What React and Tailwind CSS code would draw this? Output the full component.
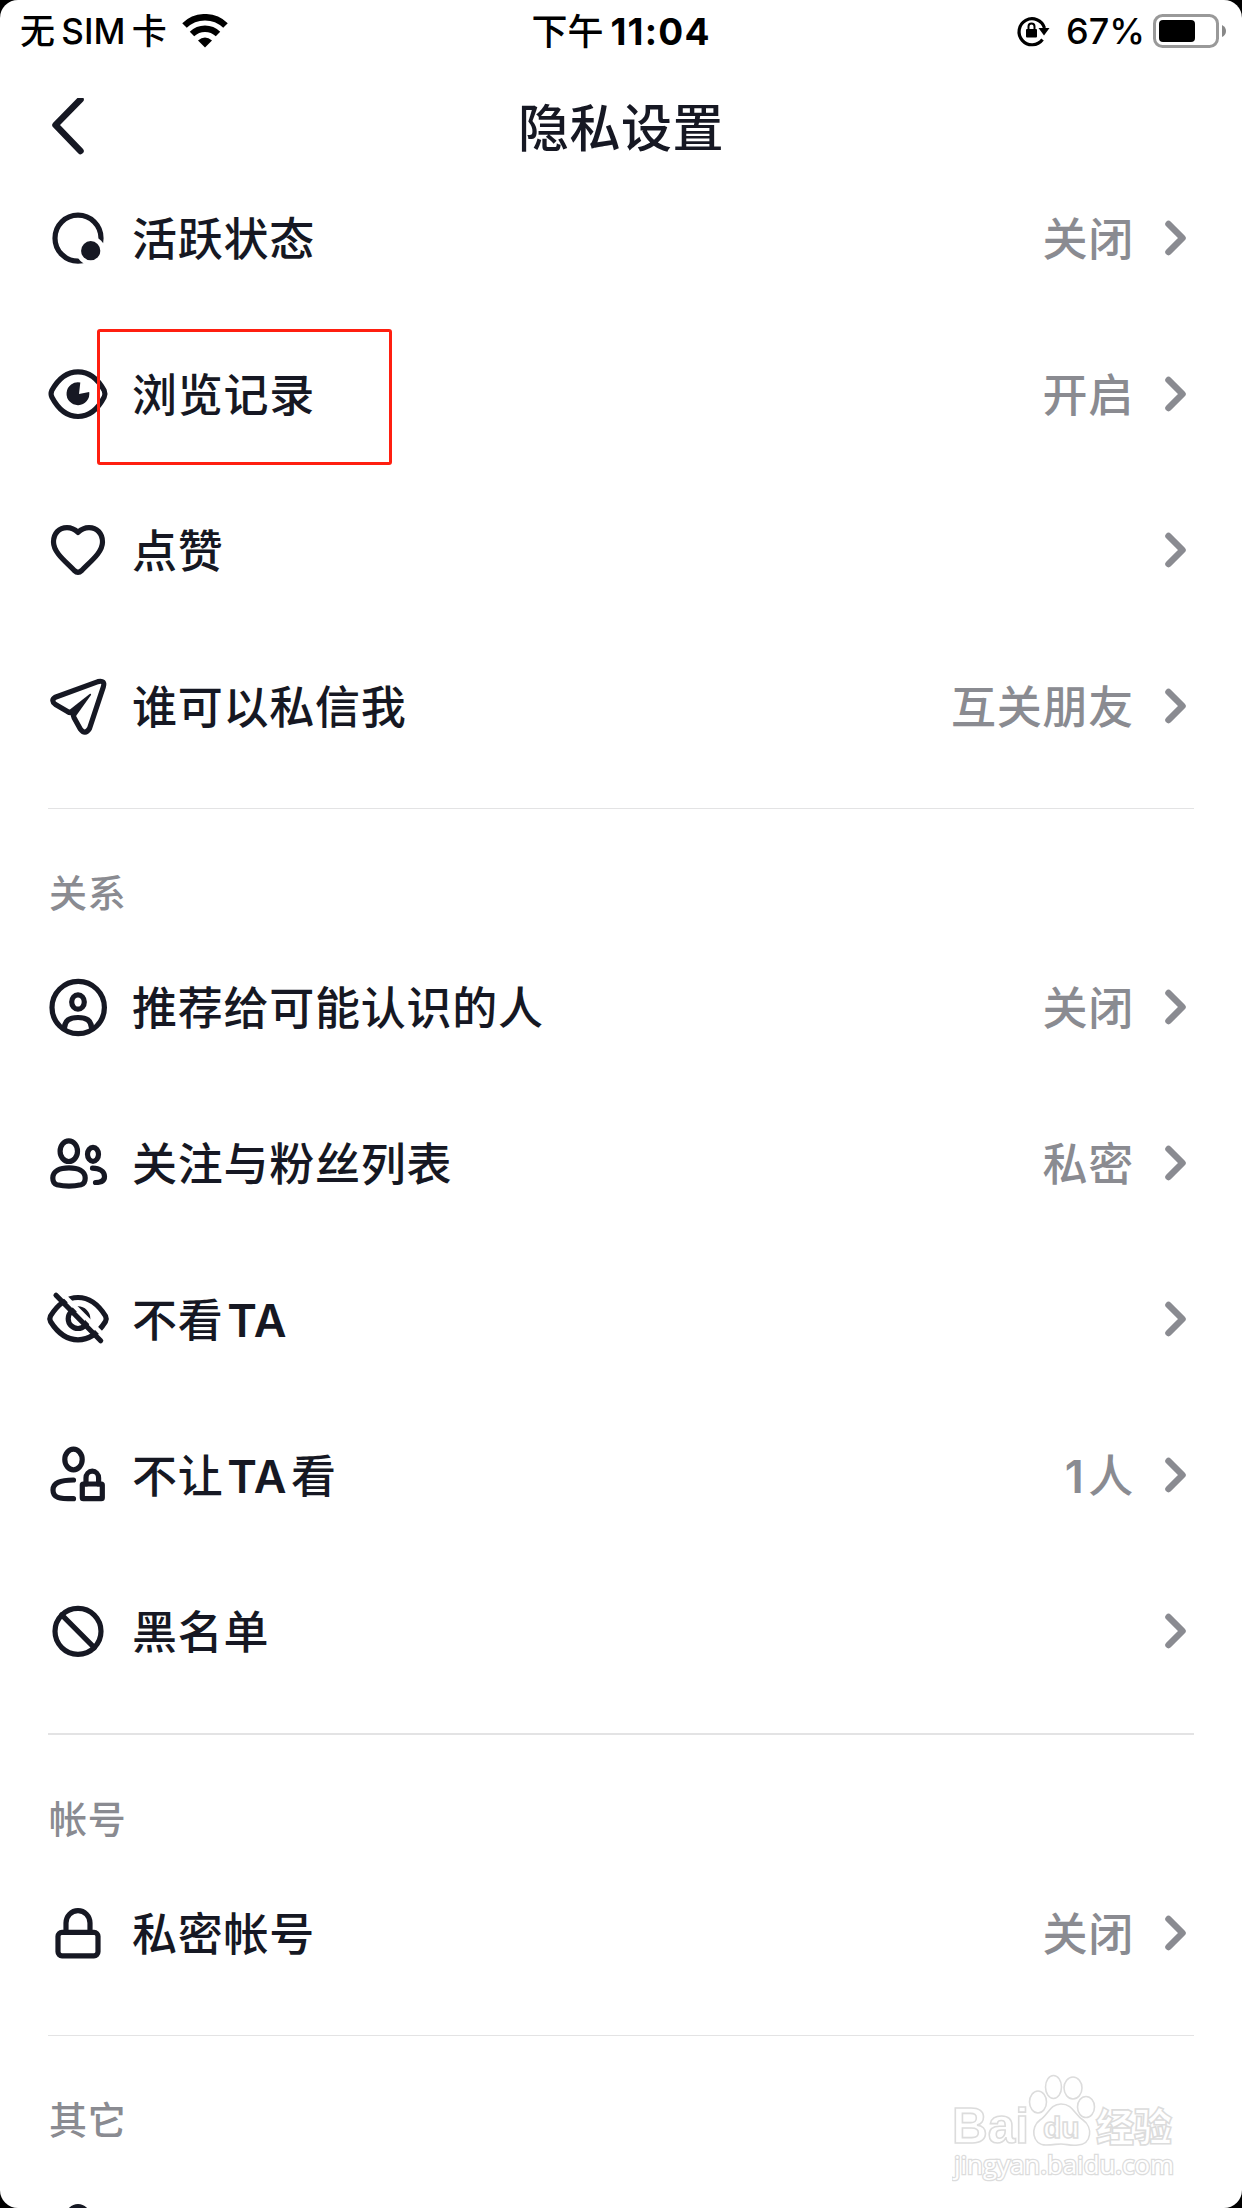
const ActiveIcon = () => (
  <>
    <circle cx="30" cy="30.2" r="23" />
    <circle cx="42.7" cy="42.7" r="14.5" fill="#fff" stroke="none" />
    <circle cx="42.7" cy="42.7" r="9.6" fill="currentColor" stroke="none" />
  </>
);

const EyeIcon = () => (
  <>
    <path d="M3.8 26.5Q14 7.8 30 7.8T56.2 26.5Q57.6 29.8 56.2 33Q46 52.5 30 52.5T3.8 33Q2.4 29.8 3.8 26.5Z" />
    <path d="M32.3 18.6A11.4 11.4 0 1 0 41.2 28L31 30Z" fill="currentColor" stroke="none" />
  </>
);

const HeartIcon = () => (
  <path d="M30 12.4C26.5 9 22.8 7.6 19 7.6C11 7.6 5.5 13.5 5.5 22C5.5 33 19 42.5 26.3 50.5Q30 54 33.7 50.5C41 42.5 54.5 33 54.5 22C54.5 13.5 49 7.6 41 7.6C37.2 7.6 33.5 9 30 12.4Z" />
);

const SendIcon = () => (
  <>
    <path d="M24.5 36.2Q22 37.2 19.5 35.5L7.5 28.5Q2.2 24.5 7.3 21.3L50 5.6Q57.5 4 55.3 11L41.5 52.5Q37 59.5 32.3 53L26.2 42Q25 39.5 25.3 36.2" />
    <path d="M20 35L42 17.7Q43.5 17.5 43 19L28 40Z" fill="currentColor" stroke="none" />
  </>
);

const UserCircleIcon = () => (
  <>
    <circle cx="30.2" cy="30.5" r="26.2" />
    <ellipse cx="30" cy="25" rx="6.3" ry="7.2" />
    <path d="M16.5 51C16.5 43 22 40.5 30 40.5S43.5 43 43.5 51" />
  </>
);

const UsersIcon = () => (
  <>
    <ellipse cx="20.8" cy="18.2" rx="8.7" ry="10.3" />
    <path d="M4.8 45C4.8 38 12 34.8 21 34.8S37.2 38 37.2 45Q37.3 50.5 33 51.7Q21 54.5 9 51.7Q4.8 50.5 4.8 45Z" />
    <ellipse cx="45" cy="21.3" rx="5.5" ry="7" />
    <path d="M44.5 35.2C52 35.5 56.5 38.5 56.5 43.5Q56.5 49.5 47.5 49.5" />
  </>
);

const EyeOffIcon = () => (
  <>
    <path d="M2.5 27Q14 8.5 30 8.5T57.5 27Q58.8 29.7 57.5 32.5Q46 50.8 30 50.8T2.5 32.5Q1.2 29.7 2.5 27Z" />
    <circle cx="30" cy="29.7" r="9.8" />
    <path d="M12 2.5L61 52" stroke="#fff" strokeWidth="4.5" />
    <path d="M8 6.3L52.7 51.7" />
  </>
);

const UserLockIcon = () => (
  <>
    <ellipse cx="25.5" cy="14.5" rx="8.7" ry="10.3" />
    <path d="M25.5 35C12 35 5 38 5 45C5 53 11 53.7 25.5 53.7" />
    <rect x="34.3" y="39" width="20" height="14.7" rx="1" />
    <path d="M38 39V33a6.3 6.8 0 0 1 12.6 0V39" />
  </>
);

const BanIcon = () => (
  <>
    <circle cx="30" cy="30.3" r="23" />
    <path d="M13.7 13.8L46.3 46.7" />
  </>
);

const LockIcon = () => (
  <>
    <rect x="10" y="29.3" width="40" height="23.5" rx="4" />
    <path d="M18 29V20a12 12.3 0 0 1 24 0V29" />
  </>
);

const PersonIcon = () => <circle cx="30" cy="12" r="9.5" />;

const Latin = ({ children }) => <span className="font-semibold">{children}</span>;

const sections = [
  {
    items: [
      { icon: ActiveIcon, label: '活跃状态', value: '关闭' },
      { icon: EyeIcon, label: '浏览记录', value: '开启', marked: true },
      { icon: HeartIcon, label: '点赞' },
      { icon: SendIcon, label: '谁可以私信我', value: '互关朋友' },
    ],
  },
  {
    title: '关系',
    divider: 'h-px',
    items: [
      { icon: UserCircleIcon, label: '推荐给可能认识的人', value: '关闭' },
      { icon: UsersIcon, label: '关注与粉丝列表', value: '私密' },
      { icon: EyeOffIcon, label: <>不看 <Latin>TA</Latin></> },
      { icon: UserLockIcon, label: <>不让 <Latin>TA</Latin> 看</>, value: <><Latin>1</Latin> 人</> },
      { icon: BanIcon, label: '黑名单' },
    ],
  },
  {
    title: '帐号',
    divider: 'h-0.5',
    items: [{ icon: LockIcon, label: '私密帐号', value: '关闭' }],
  },
  {
    title: '其它',
    divider: 'h-px',
    items: [{ icon: PersonIcon, label: '' }],
  },
];

const StatusBar = () => (
  <div className="grid h-16 shrink-0 grid-cols-3 items-center pb-0.5 text-[36px] leading-none text-black">
    <div className="flex items-center pl-5 font-medium">
      <span className="pt-px text-[35px] whitespace-nowrap [word-spacing:-3px]">无 SIM 卡</span>
      <svg width="46" height="34" viewBox="0 0 46 34" className="ml-[15px]" fill="none" stroke="currentColor">
        <path d="M2.5 11.5A29.5 29.5 0 0 1 43.5 11.5" strokeWidth="6.5" />
        <path d="M10 20A19 19 0 0 1 36 20" strokeWidth="6.5" />
        <path d="M16 26.5Q23 20.5 30 26.5L23 33.5Z" fill="currentColor" stroke="none" />
      </svg>
    </div>
    <div className="flex items-center justify-center whitespace-nowrap">
      <span className="pt-px">下午</span>
      <span className="ml-[7px] text-[37px] font-bold tracking-[1.2px]">11:04</span>
    </div>
    <div className="flex items-center justify-end pr-[15px]">
      <svg width="34" height="32" viewBox="0 0 34 32" fill="none" stroke="currentColor" strokeWidth="3.2">
        <path d="M26.5 24.5A13 13 0 1 1 28.5 13" />
        <path d="M22.5 13H33.5L28 20.5Z" fill="currentColor" stroke="none" />
        <rect x="10" y="14" width="11" height="8.5" rx="1" fill="currentColor" stroke="none" />
        <path d="M12.5 15V11.5a3 3 0 0 1 6 0V15" strokeWidth="2" />
      </svg>
      <span className="ml-4 font-medium">67%</span>
      <svg width="74" height="36" viewBox="0 0 74 36" className="ml-2">
        <rect x="1.5" y="2.5" width="63" height="31" rx="8" fill="none" stroke="#999" strokeWidth="3" />
        <rect x="6" y="7" width="36" height="22" rx="4" />
        <path d="M69 12Q73 14 73 18T69 24Z" fill="#888" />
      </svg>
    </div>
  </div>
);

const Header = () => (
  <div className="grid h-24 shrink-0 grid-cols-3 items-center px-12 pt-8">
    <svg width="40" height="60" viewBox="0 0 40 60" fill="none" stroke="currentColor" strokeWidth="6.5" strokeLinecap="round" strokeLinejoin="round">
      <path d="M32.5 1.5L7.5 27L32.5 53" />
    </svg>
    <h1 className="text-center text-[51px] leading-none tracking-[0.5px] whitespace-nowrap">隐私设置</h1>
  </div>
);

const Row = ({ icon: Icon, label, value, marked }) => (
  <div className="relative flex h-[156px] shrink-0 items-center pr-1.5">
    <svg width="60" height="60" viewBox="0 0 60 60" className="shrink-0 overflow-visible" fill="none" stroke="currentColor" strokeWidth="5.2" strokeLinecap="round" strokeLinejoin="round">
      <Icon />
    </svg>
    <span className="ml-6 flex-1 pt-[3px] text-[45px] leading-none tracking-[0.75px] [word-spacing:-9px]">{label}</span>
    {value && <span className="mr-[30px] pt-[3px] text-[45px] leading-none tracking-[0.75px] text-[#8a8b91] [word-spacing:-9px]">{value}</span>}
    <svg width="24" height="40" viewBox="0 0 24 40" fill="none" stroke="#8a8b91" strokeWidth="6.5" strokeLinecap="round" strokeLinejoin="round">
      <path d="M4.5 6L18.5 20L4.5 34" />
    </svg>
    {marked && <div className="absolute top-[13px] left-[49px] h-[136px] w-[295px] rounded-[3px] border-3 border-[#ff1f10]" />}
  </div>
);

const Watermark = () => (
  <div className="absolute top-[2070px] left-[952px] h-[124px] w-[236px]">
    <svg width="236" height="124" viewBox="0 0 236 124" fill="#fff" stroke="#dcdcdc" strokeWidth="1.6">
      <ellipse cx="86" cy="32" rx="8.5" ry="11" />
      <ellipse cx="101.5" cy="17" rx="8" ry="11.5" />
      <ellipse cx="121" cy="18" rx="9" ry="11" />
      <ellipse cx="134" cy="37" rx="8.5" ry="10.5" />
      <path d="M109 34C98 34 96 45 88 50C78 57 80 75 94 75C102 75 104 74 109 74C115 74 118 76 126 75C140 74 141 57 131 50C122 44 121 34 109 34Z" />
      <text x="0" y="73" fontSize="50" fontWeight="700" fontFamily="Liberation Sans, sans-serif" textLength="77" lengthAdjust="spacingAndGlyphs">Bai</text>
      <text x="91" y="68" fontSize="30" fontWeight="700" fontFamily="Liberation Sans, sans-serif">du</text>
      <text x="144" y="71" fontSize="39" fontWeight="900" textLength="76" lengthAdjust="spacingAndGlyphs">经验</text>
      <text x="2" y="104" fontSize="26" strokeWidth="2.6" paintOrder="stroke" fontFamily="Open Sans, sans-serif" fontWeight="400" textLength="220" lengthAdjust="spacingAndGlyphs">jingyan.baidu.com</text>
    </svg>
  </div>
);

const App = () => {
  return (
    <div className="bg-black">
      <div className="relative flex h-[2208px] w-[1242px] flex-col overflow-hidden rounded-[18px] bg-white font-['Inter','Noto_Sans_CJK_SC',sans-serif] font-medium text-[#161823]">
        <StatusBar />
        <Header />
        {sections.map((section, i) => (
          <div key={i} className="flex shrink-0 flex-col px-12">
            {section.title && (
              <>
                <div className={`mt-6 shrink-0 bg-[#e3e3e4] ${section.divider}`} />
                <div className="flex h-[120px] shrink-0 items-center pt-12 pl-px text-[38px] leading-none tracking-[0.8px] text-[#8a8b91]">
                  {section.title}
                </div>
              </>
            )}
            {section.items.map((item, j) => (
              <Row key={j} {...item} />
            ))}
          </div>
        ))}
        <Watermark />
      </div>
    </div>
  );
};

export default App;
